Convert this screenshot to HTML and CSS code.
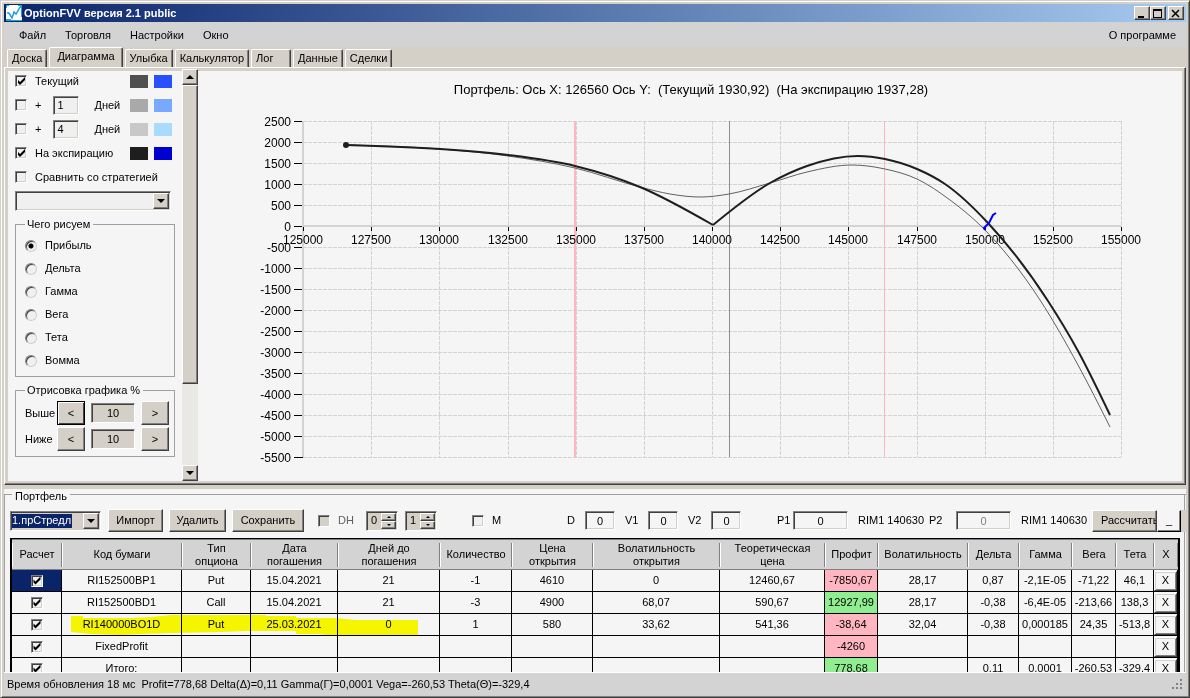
FILE: index.html
```html
<!DOCTYPE html>
<html lang="ru">

<head>
    <meta charset="UTF-8">
    <meta name="viewport" content="width=device-width, initial-scale=1.0">
    <title>OptionFVV версия 2.1 public</title>
    <link rel="stylesheet" href="styles.css">
</head>

<body>
    <div class="window">
        <header class="title-bar">
            <svg class="app-icon" width="16" height="16" viewBox="0 0 16 16">
                <rect width="16" height="16" fill="#fff"/>
                <path d="M0 0h3v1H1v2H0zM16 0v12h-1V3h-1V1h-2V0zM0 14h5v1h11v1H0z" fill="#1ea0e0"/>
                <path d="M1 8h2l3 5 2-6 2 2 4-7" fill="none" stroke="#1ea0e0" stroke-width="1.5"/>
            </svg>
            <h1>OptionFVV версия 2.1 public</h1>
            <div class="window-buttons">
                <button type="button" aria-label="Свернуть"><svg width="12" height="10"><path d="M3 8h6v2H3z"/></svg></button>
                <button type="button" aria-label="Развернуть"><svg width="12" height="10"><path d="M2 1h9v9H2zM3 3v6h7V3z" fill-rule="evenodd"/></svg></button>
                <button type="button" class="close" aria-label="Закрыть"><svg width="12" height="10"><path d="M3 2l7 7M10 2l-7 7" stroke="#000" stroke-width="1.5"/></svg></button>
            </div>
        </header>

        <nav class="menu">
            <a href="#">Файл</a>
            <a href="#">Торговля</a>
            <a href="#">Настройки</a>
            <a href="#">Окно</a>
            <a href="#" class="about">О программе</a>
        </nav>

        <div class="tabs">
            <button type="button">Доска</button>
            <button type="button" class="active">Диаграмма</button>
            <button type="button">Улыбка</button>
            <button type="button">Калькулятор</button>
            <button type="button">Лог</button>
            <button type="button">Данные</button>
            <button type="button">Сделки</button>
        </div>

        <main class="tab-page">
            <aside class="side">
                <div class="options">
                    <div class="option">
                        <input type="checkbox" id="current" checked>
                        <label for="current">Текущий</label>
                        <span class="swatch dark-gray"></span>
                        <span class="swatch blue"></span>
                    </div>
                    <div class="option">
                        <input type="checkbox" id="plus1">
                        <label for="plus1">+</label>
                        <input type="text" class="days" value="1" aria-label="Дней">
                        <span class="unit">Дней</span>
                        <span class="swatch gray"></span>
                        <span class="swatch mid-blue"></span>
                    </div>
                    <div class="option">
                        <input type="checkbox" id="plus4">
                        <label for="plus4">+</label>
                        <input type="text" class="days" value="4" aria-label="Дней">
                        <span class="unit">Дней</span>
                        <span class="swatch light-gray"></span>
                        <span class="swatch light-blue"></span>
                    </div>
                    <div class="option">
                        <input type="checkbox" id="expiry" checked>
                        <label for="expiry">На экспирацию</label>
                        <span class="swatch black"></span>
                        <span class="swatch navy"></span>
                    </div>
                    <div class="option">
                        <input type="checkbox" id="compare">
                        <label for="compare">Сравнить со стратегией</label>
                    </div>
                    <div class="combo">
                        <select aria-label="Стратегия"><option></option></select>
                        <span class="combo-arrow"></span>
                    </div>

                    <fieldset class="group">
                        <legend>Чего рисуем</legend>
                        <label class="radio"><input type="radio" name="draw" checked>Прибыль</label>
                        <label class="radio"><input type="radio" name="draw">Дельта</label>
                        <label class="radio"><input type="radio" name="draw">Гамма</label>
                        <label class="radio"><input type="radio" name="draw">Вега</label>
                        <label class="radio"><input type="radio" name="draw">Тета</label>
                        <label class="radio"><input type="radio" name="draw">Вомма</label>
                    </fieldset>

                    <fieldset class="group">
                        <legend>Отрисовка графика %</legend>
                        <div class="range">
                            <label for="above">Выше</label>
                            <button type="button" class="focused">&lt;</button>
                            <input type="text" id="above" value="10">
                            <button type="button">&gt;</button>
                        </div>
                        <div class="range">
                            <label for="below">Ниже</label>
                            <button type="button">&lt;</button>
                            <input type="text" id="below" value="10">
                            <button type="button">&gt;</button>
                        </div>
                    </fieldset>
                </div>
                <div class="scrollbar">
                    <button type="button" aria-label="Вверх"><span class="arrow-up"></span></button>
                    <div class="thumb"></div>
                    <div class="track"></div>
                    <button type="button" aria-label="Вниз"><span class="arrow-down"></span></button>
                </div>
            </aside>

            <svg class="chart" id="chart" viewBox="198 69 984 411" preserveAspectRatio="xMinYMin meet">
                <text class="chart-title" x="691" y="94" xml:space="preserve">Портфель: Ось X: 126560 Ось Y:  (Текущий 1930,92)  (На экспирацию 1937,28)</text>
            </svg>
        </main>

        <fieldset class="portfolio">
            <legend>Портфель</legend>
            <div class="toolbar">
                <div class="combo">
                    <select class="selected" aria-label="Портфель"><option>1.прСтредл</option></select>
                    <span class="combo-arrow"></span>
                </div>
                <button type="button">Импорт</button>
                <button type="button">Удалить</button>
                <button type="button" class="save">Сохранить</button>
                <label class="check disabled"><input type="checkbox" disabled>DH</label>
                <div class="spin">
                    <input type="text" value="0" aria-label="DH от">
                    <div class="spin-buttons">
                        <button type="button" aria-label="Больше"><span class="arrow-up"></span></button>
                        <button type="button" aria-label="Меньше"><span class="arrow-down"></span></button>
                    </div>
                </div>
                <div class="spin">
                    <input type="text" value="1" aria-label="DH шаг">
                    <div class="spin-buttons">
                        <button type="button" aria-label="Больше"><span class="arrow-up"></span></button>
                        <button type="button" aria-label="Меньше"><span class="arrow-down"></span></button>
                    </div>
                </div>
                <label class="check"><input type="checkbox">M</label>
                <label class="param">D<input type="text" value="0"></label>
                <label class="param">V1<input type="text" value="0"></label>
                <label class="param">V2<input type="text" value="0"></label>
                <label class="param price">P1<input type="text" value="0"></label>
                <span>RIM1 140630</span>
                <label class="param price">P2<input type="text" value="0" disabled></label>
                <span>RIM1 140630</span>
                <div class="calc">
                    <button type="button">Рассчитать</button>
                    <button type="button" class="collapse">_</button>
                </div>
            </div>

            <table class="positions">
                <colgroup>
                    <col class="w50"><col class="w120"><col class="w69"><col class="w87"><col class="w102"><col class="w72">
                    <col class="w81"><col class="w127"><col class="w105"><col class="w53"><col class="w90"><col class="w51">
                    <col class="w53"><col class="w44"><col class="w38"><col class="w24">
                </colgroup>
                <thead>
                    <tr>
                        <th>Расчет</th>
                        <th>Код бумаги</th>
                        <th>Тип<br>опциона</th>
                        <th>Дата<br>погашения</th>
                        <th>Дней до<br>погашения</th>
                        <th>Количество</th>
                        <th>Цена<br>открытия</th>
                        <th>Волатильность<br>открытия</th>
                        <th>Теоретическая<br>цена</th>
                        <th>Профит</th>
                        <th>Волатильность</th>
                        <th>Дельта</th>
                        <th>Гамма</th>
                        <th>Вега</th>
                        <th>Тета</th>
                        <th>X</th>
                    </tr>
                </thead>
                <tbody>
                    <tr>
                        <td class="current"><input type="checkbox" checked aria-label="RI152500BP1"></td>
                        <td>RI152500BP1</td><td>Put</td><td>15.04.2021</td><td>21</td><td>-1</td><td>4610</td><td>0</td><td>12460,67</td>
                        <td class="loss">-7850,67</td><td>28,17</td><td>0,87</td><td>-2,1E-05</td><td>-71,22</td><td>46,1</td>
                        <td class="remove"><button type="button">X</button></td>
                    </tr>
                    <tr>
                        <td><input type="checkbox" checked aria-label="RI152500BD1"></td>
                        <td>RI152500BD1</td><td>Call</td><td>15.04.2021</td><td>21</td><td>-3</td><td>4900</td><td>68,07</td><td>590,67</td>
                        <td class="gain">12927,99</td><td>28,17</td><td>-0,38</td><td>-6,4E-05</td><td>-213,66</td><td>138,3</td>
                        <td class="remove"><button type="button">X</button></td>
                    </tr>
                    <tr>
                        <td><input type="checkbox" checked aria-label="RI140000BO1D"></td>
                        <td class="marked">RI140000BO1D
                            <svg class="marker" width="347" height="22" viewBox="0 0 347 22">
                                <path d="M0 2H12V4H60L80 3 100 1H195V2H225V4H265L285 6H347V22H265L247 20H225V17H175L150 18 100 19 70 20 50 21 20 20 0 18Z" fill="#ffff00"/>
                            </svg>
                        </td>
                        <td>Put</td><td>25.03.2021</td><td>0</td><td>1</td><td>580</td><td>33,62</td><td>541,36</td>
                        <td class="loss">-38,64</td><td>32,04</td><td>-0,38</td><td>0,000185</td><td>24,35</td><td>-513,8</td>
                        <td class="remove"><button type="button">X</button></td>
                    </tr>
                    <tr>
                        <td><input type="checkbox" checked aria-label="FixedProfit"></td>
                        <td>FixedProfit</td><td></td><td></td><td></td><td></td><td></td><td></td><td></td>
                        <td class="loss">-4260</td><td></td><td></td><td></td><td></td><td></td>
                        <td class="remove"><button type="button">X</button></td>
                    </tr>
                    <tr>
                        <td><input type="checkbox" checked aria-label="Итого"></td>
                        <td>Итого:</td><td></td><td></td><td></td><td></td><td></td><td></td><td></td>
                        <td class="gain">778,68</td><td></td><td>0,11</td><td>0,0001</td><td>-260,53</td><td>-329,4</td>
                        <td class="remove"><button type="button">X</button></td>
                    </tr>
                </tbody>
            </table>
        </fieldset>

        <footer class="status">
            <span>Время обновления 18 мс</span>
            <span>Profit=778,68 Delta(Δ)=0,11 Gamma(Г)=0,0001 Vega=-260,53 Theta(Θ)=-329,4</span>
            <svg class="grip" width="12" height="12"><path d="M9 1h2v2H9zM5 5h2v2H5zM9 5h2v2H9zM1 9h2v2H1zM5 9h2v2H5zM9 9h2v2H9z"/></svg>
        </footer>
    </div>

    <script src="chart.js"></script>
</body>

</html>
```

FILE: styles.css
```css
* {
    margin: 0;
    padding: 0;
    box-sizing: border-box;
}

body {
    font-family: "Liberation Sans", Arial, sans-serif;
    font-size: 11px;
    line-height: 13px;
    color: #000;
    background-color: #d4d0c8;
}

button,
input,
select {
    font: inherit;
    color: inherit;
    border-radius: 0;
    outline: none;
}

.window {
    display: flex;
    flex-direction: column;
    height: 100vh;
    padding: 3px 3px 2px;
    border: 1px solid #d4d0c8;
    border-right-color: #404040;
    border-bottom-color: #404040;
    box-shadow: inset 1px 1px #fff, inset -1px -1px #808080;
}

/* Title bar */
.title-bar {
    display: flex;
    align-items: center;
    flex: 0 0 18px;
    padding: 0 2px;
    color: #fff;
    background: linear-gradient(to right, #0a246a, #a6caf0);
}

.title-bar h1 {
    flex: 1;
    margin-left: 2px;
    font-size: 11px;
    font-weight: bold;
}

.window-buttons {
    display: flex;
}

.window-buttons button {
    width: 16px;
    height: 14px;
}

.window-buttons svg {
    display: block;
}

.window-buttons .close {
    margin-left: 2px;
}

/* Raised 3D buttons */
.window-buttons button,
.toolbar button,
.range button,
.scrollbar button,
.combo-arrow,
.thumb {
    border: 1px solid #fff;
    border-right-color: #404040;
    border-bottom-color: #404040;
    box-shadow: inset -1px -1px #808080;
    background-color: #d4d0c8;
}

/* Menu */
.menu {
    display: flex;
    align-items: center;
    gap: 19px;
    flex: 0 0 25px;
    padding: 2px 10px 0 15px;
    background-color: #d3d3d3;
}

.menu a {
    color: #000;
    text-decoration: none;
}

.menu .about {
    margin-left: auto;
}

/* Tabs */
.tabs {
    display: flex;
    align-items: flex-end;
    gap: 2px;
    flex: 0 0 20px;
    padding-left: 3px;
}

.tabs button {
    height: 18px;
    min-width: 40px;
    padding: 0 4px;
    text-align: left;
    background-color: #d4d0c8;
    border: 1px solid #fff;
    border-right-color: #404040;
    border-bottom: none;
    border-radius: 2px 2px 0 0;
    box-shadow: inset -1px 0 #808080;
}

.tabs .active {
    height: 20px;
    padding: 0 7px 2px;
}

.tab-page {
    display: flex;
    flex: 1;
    min-height: 0;
    border: 1px solid #fff;
    border-right-color: #404040;
    border-bottom-color: #404040;
    box-shadow: inset -1px -1px #808080, inset 0 0 0 3px #d4d0c8;
    padding: 1px 3px 3px;
    background-color: #f5f5f5;
}

/* Left panel */
.side {
    display: flex;
    flex: 0 0 190px;
}

.options {
    flex: 1;
    min-width: 0;
    padding: 0 7px;
    overflow: hidden;
}

.option {
    display: flex;
    align-items: center;
    height: 24px;
}

.option label {
    margin-left: 8px;
}

input[type="checkbox"] {
    appearance: none;
    flex: none;
    width: 12px;
    height: 12px;
    background-color: #f0f0f0;
    border: 1px solid #808080;
    border-right-color: #fff;
    border-bottom-color: #fff;
    box-shadow: inset 1px 1px #404040, inset -1px -1px #d4d0c8;
}

input[type="checkbox"]:checked::before {
    content: "";
    display: block;
    width: 10px;
    height: 10px;
    background-color: #000;
    clip-path: polygon(20% 40%, 40% 60%, 90% 10%, 90% 40%, 40% 90%, 20% 70%);
}

.days {
    width: 26px;
    height: 19px;
    margin-left: 12px;
    padding-left: 3px;
}

.days,
.range input,
.param input,
.combo,
.spin {
    background-color: #f0f0f0;
    border: 1px solid #808080;
    border-right-color: #fff;
    border-bottom-color: #fff;
    box-shadow: inset 1px 1px #404040, inset -1px -1px #d4d0c8;
}

.unit {
    margin-left: 15px;
}

.swatch {
    width: 18px;
    height: 13px;
    margin-left: 6px;
}

.option .swatch:nth-last-child(2) {
    margin-left: auto;
}

.option .swatch:last-child {
    margin-right: 3px;
}

.dark-gray { background-color: #505050; }
.gray { background-color: #a9a9a9; }
.light-gray { background-color: #c8c8c8; }
.black { background-color: #1e1e1e; }
.blue { background-color: #2850ff; }
.mid-blue { background-color: #78a8ff; }
.light-blue { background-color: #a8dcff; }
.navy { background-color: #0000d0; }

.combo {
    display: flex;
    height: 20px;
    padding: 1px;
}

.options .combo {
    width: 156px;
    margin-top: 2px;
}

.combo select {
    appearance: none;
    flex: 1;
    min-width: 0;
    border: none;
    background-color: transparent;
}

.combo-arrow {
    display: flex;
    align-items: center;
    justify-content: center;
    flex: none;
    width: 16px;
}

.combo-arrow::before,
.arrow-down,
.arrow-up {
    content: "";
    display: block;
    border: 4px solid transparent;
    border-top-color: #000;
    border-bottom: none;
}

.arrow-up {
    border-top: none;
    border-bottom: 4px solid #000;
}

.group {
    min-width: 0;
    margin-top: 7px;
    padding: 3px 4px 4px 9px;
    border: 1px solid #a0a0a0;
}

.group legend {
    padding: 0 3px 0 2px;
}

.radio {
    display: flex;
    align-items: center;
    gap: 8px;
    height: 23px;
}

input[type="radio"] {
    appearance: none;
    width: 12px;
    height: 12px;
    border: 1px solid #808080;
    border-right-color: #d4d0c8;
    border-bottom-color: #d4d0c8;
    border-radius: 50%;
    background-color: #f0f0f0;
    box-shadow: inset 1px 1px #404040;
}

input[type="radio"]:checked {
    background-image: radial-gradient(circle, #000 2px, transparent 3px);
}

.range {
    display: grid;
    grid-template-columns: 26px 28px 44px 28px;
    column-gap: 6px;
    align-items: center;
    height: 26px;
}

.range label {
    white-space: nowrap;
}

.range button {
    height: 24px;
}

.range .focused {
    border-color: #000;
    box-shadow: inset 1px 1px #fff, inset -1px -1px #404040;
}

.range input {
    width: 44px;
    height: 20px;
    text-align: center;
    background-color: #d4d0c8;
}

.scrollbar {
    display: flex;
    flex-direction: column;
    width: 16px;
    background-color: #eae8e4;
}

.scrollbar button {
    display: flex;
    align-items: center;
    justify-content: center;
    height: 16px;
}

.thumb {
    flex: 298;
}

.track {
    flex: 81;
}

/* Chart */
.chart {
    flex: 1;
    min-width: 0;
    width: 100%;
    height: 100%;
    font-size: 12px;
}

.chart-title {
    font-size: 13px;
    text-anchor: middle;
}

.grid {
    stroke: #d3d3d3;
    stroke-dasharray: 4 1;
}

.axis {
    stroke: #d3d3d3;
    stroke-width: 2;
}

.tick {
    stroke: #000;
}

.level {
    stroke: #ffb6c1;
}

.price-line {
    stroke: #8c8c96;
}

.label-x {
    text-anchor: middle;
}

.label-y {
    text-anchor: end;
}

.curve {
    fill: none;
    stroke: #1e1e1e;
    stroke-width: 2;
}

.curve.thin {
    stroke: #606060;
    stroke-width: 1;
}

.pen {
    fill: none;
    stroke: #00f;
    stroke-width: 2;
}

/* Portfolio */
.portfolio {
    flex: 0 0 183px;
    min-width: 0;
    margin-top: 4px;
    padding: 1px 0 0 6px;
    border: none;
    background:
        linear-gradient(#a0a0a0, #a0a0a0) 0 5px / 100% 1px no-repeat,
        linear-gradient(#a0a0a0, #a0a0a0) 0 5px / 1px 100% no-repeat,
        linear-gradient(#a0a0a0, #a0a0a0) calc(100% - 1px) 5px / 1px 100% no-repeat,
        #f5f5f5;
    overflow: hidden;
}

.portfolio legend {
    float: left;
    padding: 0 3px;
    margin-left: 2px;
    background-color: #f5f5f5;
}

.toolbar {
    clear: both;
    display: grid;
    grid-template-columns: 98px 61px 63px 86px 48px 39px 67px 95px 58px 63px 89px 81px 71px 92px 71px 1fr;
    align-items: center;
    height: 35px;
    white-space: nowrap;
}

.toolbar .combo {
    width: 91px;
    background-color: #d4d0c8;
}

.toolbar .selected {
    flex: none;
    width: 60px;
    height: 14px;
    margin: 1px 11px 0 0;
    color: #fff;
    background-color: #0a246a;
}

.toolbar > button {
    height: 23px;
    margin-right: 6px;
}

.toolbar .save {
    margin-right: 14px;
}

.check {
    display: flex;
    align-items: center;
    gap: 8px;
}

.disabled {
    color: #606060;
}

.disabled input {
    background-color: #d4d0c8;
}

.spin {
    display: flex;
    width: 32px;
    height: 20px;
    padding: 1px;
    background-color: #d4d0c8;
}

.spin input {
    width: 13px;
    padding-left: 3px;
    border: none;
    background-color: transparent;
}

.spin-buttons {
    display: flex;
    flex-direction: column;
    flex: 1;
}

.toolbar .spin-buttons button {
    display: flex;
    align-items: center;
    justify-content: center;
    flex: 1;
    min-height: 0;
}

.spin-buttons span {
    border-width: 2px;
}

.param {
    display: flex;
    align-items: center;
    gap: 10px;
}

.param input {
    width: 30px;
    height: 19px;
    text-align: center;
    background-color: #f5f5f5;
}

.param.price {
    justify-content: space-between;
    gap: 0;
    padding-right: 10px;
}

.price input {
    width: 55px;
}

.param input:disabled {
    color: #808080;
}

.calc {
    display: flex;
    height: 22px;
    background-color: #d4d0c8;
    overflow: hidden;
}

.calc button {
    height: 22px;
    flex: 1;
    min-width: 0;
    padding-left: 8px;
    text-align: left;
    overflow: hidden;
}

.toolbar .calc .collapse {
    flex: 0 0 24px;
    margin-right: 5px;
    padding: 0;
    text-align: center;
    background-color: #f5f5f5;
    border-color: #f5f5f5 #000 #000 #f5f5f5;
}

/* Positions table */
.positions {
    table-layout: fixed;
    width: calc(100% - 6px);
    border: 2px solid #000;
    border-top-width: 1px;
    border-spacing: 0;
    text-align: center;
    white-space: nowrap;
}

.positions th {
    height: 31px;
    font-weight: normal;
    border-top: 1px solid #808080;
    border-bottom: 1px solid #808080;
    background:
        linear-gradient(#808080, #808080) 100% 3px / 1px calc(100% - 5px) no-repeat,
        linear-gradient(#fff, #fff) 0 3px / 1px calc(100% - 5px) no-repeat,
        #d3d3d3;
}

.positions td {
    height: 22px;
    border-right: 1px solid #000;
    border-bottom: 1px solid #000;
}

.positions td input {
    display: block;
    margin: 0 auto;
}

.positions .current {
    background-color: #0a246a;
}

.loss {
    background-color: #ffb6c1;
}

.gain {
    background-color: #90ee90;
}

.marked {
    position: relative;
}

/* highlighter stroke runs over several cells */
.marker {
    position: absolute;
    left: 9px;
    top: 0;
    mix-blend-mode: multiply;
}

.remove button {
    display: block;
    width: 100%;
    height: 20px;
    background-color: #f5f5f5;
    border: 1px solid #fff;
    border-right-color: #404040;
    border-bottom-color: #404040;
    box-shadow: inset 1px 1px #d4d0c8, inset -1px -1px #808080;
}

.w24 { width: 24px; }
.w38 { width: 38px; }
.w44 { width: 44px; }
.w50 { width: 50px; }
.w51 { width: 51px; }
.w53 { width: 53px; }
.w69 { width: 69px; }
.w72 { width: 72px; }
.w81 { width: 81px; }
.w87 { width: 87px; }
.w90 { width: 90px; }
.w102 { width: 102px; }
.w105 { width: 105px; }
.w120 { width: 120px; }
.w127 { width: 127px; }

/* Status bar */
.status {
    display: flex;
    align-items: center;
    gap: 6px;
    flex: 0 0 23px;
    padding: 0 3px;
    background-color: #d3d3d3;
    border-top: 1px solid #fff;
}

.grip {
    margin-left: auto;
    fill: #808080;
}
```

FILE: chart.js
```js
const chart = document.getElementById('chart');

const left = 303, right = 1121, top0 = 121, bottom = 457, zero = 226;

// points of the two curves, in chart coordinates
const current = [[346, 145], [440, 149], [508, 156], [575, 168], [640, 187], [670, 194], [702, 197], [729, 194], [770, 183], [807, 172],
    [853, 165], [885, 169], [917, 179], [950, 200], [982, 227], [1040, 300], [1078, 365], [1110, 427]];
const expiryLeft = [[346, 145], [440, 149], [508, 155], [575, 166], [640, 187], [713, 225]];
const expiryRight = [[713, 225], [770, 183], [807, 166], [858, 156], [885, 159], [917, 169], [945, 184],
    [988, 223], [1048, 301], [1078, 351], [1110, 415]];

function add(tag, attrs, text) {
    const el = document.createElementNS('http://www.w3.org/2000/svg', tag);
    for (const key in attrs) {
        el.setAttribute(key, attrs[key]);
    }
    if (text !== undefined) {
        el.textContent = text;
    }
    chart.appendChild(el);
}

function line(cls, x1, y1, x2, y2) {
    add('line', { class: cls, x1, y1, x2, y2 });
}

// slope of the parabola through points i-1, i, i+1
function slope(p, i) {
    const n = p.length - 1;
    const d = k => (p[k + 1][1] - p[k][1]) / (p[k + 1][0] - p[k][0]);
    if (i === 0) {
        return 1.5 * d(0) - 0.5 * slope(p, 1);
    }
    if (i === n) {
        return 1.5 * d(n - 1) - 0.5 * slope(p, n - 1);
    }
    const h0 = p[i][0] - p[i - 1][0], h1 = p[i + 1][0] - p[i][0];
    return (h1 * d(i - 1) + h0 * d(i)) / (h0 + h1);
}

// smooth path through all the points
function smooth(p) {
    let d = 'M' + p[0].join(' ');
    for (let i = 0; i < p.length - 1; i++) {
        const b = p[i], c = p[i + 1];
        const h = (c[0] - b[0]) / 3;
        d += `C${b[0] + h} ${b[1] + slope(p, i) * h} ${c[0] - h} ${c[1] - slope(p, i + 1) * h} ${c[0]} ${c[1]}`;
    }
    return d;
}

for (let i = 0; i <= 12; i++) {
    const x = Math.round(left + (right - left) * i / 12) + 0.5;
    line('grid', x, top0, x, bottom);
}
for (let i = 0; i <= 16; i++) {
    const y = top0 + 21 * i + 0.5;
    line('grid', left, y, right, y);
    line('tick', left - 9, y, left, y);
    add('text', { class: 'label-y', x: left - 12, y: y + 4 }, 2500 - 500 * i);
}
line('axis', left, top0, left, bottom);
line('axis', left, zero, right, zero);
line('level', 574.5, top0, 574.5, bottom);
line('level', 575.5, top0, 575.5, bottom);
line('level', 884.5, top0, 884.5, bottom);
line('price-line', 729.5, top0, 729.5, bottom);

for (let i = 0; i <= 12; i++) {
    const x = Math.round(left + (right - left) * i / 12);
    line('tick', x + 0.5, zero + 1, x + 0.5, zero + 5);
    add('text', { class: 'label-x', x, y: 244 }, 125000 + 2500 * i);
}

add('path', { class: 'curve thin', d: smooth(current) });
add('path', { class: 'curve', d: smooth(expiryLeft) });
add('path', { class: 'curve', d: smooth(expiryRight) });
add('circle', { cx: 346, cy: 145, r: 3, fill: '#1e1e1e' });
add('path', { class: 'pen', d: 'M985 230L984 228L989 223L993 215L996 213' });
```
